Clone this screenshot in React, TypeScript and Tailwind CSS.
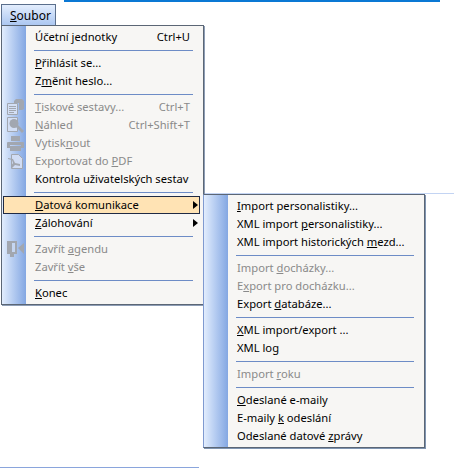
import type { ReactNode } from "react";

type Item =
  | { sep: true }
  | {
      sep?: false;
      label: ReactNode;
      shortcut?: string;
      disabled?: boolean;
      arrow?: boolean;
      active?: boolean;
      icon?: ReactNode;
    };

const ICON = "#a2a7b0";

const ReportIcon = () => (
  <svg width="17" height="16" viewBox="0 0 17 16">
    <path d="M7 2l2-2h6l2 2v8l-2 1h-3V4H7z" fill={ICON} />
    <path d="M.5 4.5h10v11H.5z" fill="#d3dff5" stroke={ICON} />
    <path d="M2 7h7v1H2zM2 9h7v1H2zM2 11h7v1H2zM2 13h5v1H2z" fill={ICON} />
  </svg>
);

const PreviewIcon = () => (
  <svg width="17" height="16" viewBox="0 0 17 16">
    <path d="M.5 .5h10v14H.5z" fill="#d3dff5" stroke={ICON} />
    <circle cx="7" cy="6.5" r="4.5" fill={ICON} />
    <path d="M9 10l2-2 6 6-2 2z" fill={ICON} />
  </svg>
);

const PrintIcon = () => (
  <svg width="17" height="15" viewBox="0 0 17 15">
    <path d="M4 0h9v5H4z" fill={ICON} />
    <path d="M1 6h15a1 1 0 011 1v5h-3V9H3v3H0V7a1 1 0 011-1z" fill={ICON} />
    <path d="M3 10h11v5H3z" fill={ICON} />
  </svg>
);

const PdfIcon = () => (
  <svg width="15" height="15" viewBox="0 0 15 15">
    <path d="M3.5 .5h7l4 4v10h-11z" fill="#d0dcf4" stroke={ICON} />
    <path d="M0 4l5 1 2 4 5 1v2l-5-1-3 3-1-2 2-3-1-3-4-1z" fill={ICON} />
  </svg>
);

const DoorIcon = () => (
  <svg width="17" height="16" viewBox="0 0 17 16">
    <path d="M0 0h10v13H7v3H3v-3H0z" fill={ICON} />
    <path d="M5 2h3v9H5z" fill="#c5d6f2" />
    <path d="M11 7l6-5v11z" fill={ICON} />
  </svg>
);

const mainItems: Item[] = [
  { label: <>Účetní jednotky</>, shortcut: "Ctrl+U" },
  { sep: true },
  { label: <><u>P</u>řihlásit se...</> },
  { label: <>Z<u>m</u>ěnit heslo...</> },
  { sep: true },
  { label: <><u>T</u>iskové sestavy...</>, shortcut: "Ctrl+T", disabled: true, icon: <ReportIcon /> },
  { label: <><u>N</u>áhled</>, shortcut: "Ctrl+Shift+T", disabled: true, icon: <PreviewIcon /> },
  { label: <>Vytisk<u>n</u>out</>, disabled: true, icon: <PrintIcon /> },
  { label: <>Exportovat do <u>P</u>DF</>, disabled: true, icon: <PdfIcon /> },
  { label: <>Kontrola uživatelských sestav</> },
  { sep: true },
  { label: <><u>D</u>atová komunikace</>, arrow: true, active: true },
  { label: <><u>Z</u>álohování</>, arrow: true },
  { sep: true },
  { label: <>Zavřít <u>a</u>gendu</>, disabled: true, icon: <DoorIcon /> },
  { label: <>Zavřít <u>v</u>še</>, disabled: true },
  { sep: true },
  { label: <><u>K</u>onec</> },
];

const subItems: Item[] = [
  { label: <><u>I</u>mport personalistiky...</> },
  { label: <>XML import <u>p</u>ersonalistiky...</> },
  { label: <>XML import historických <u>m</u>ezd...</> },
  { sep: true },
  { label: <>Import <u>d</u>ocházky...</>, disabled: true },
  { label: <>E<u>x</u>port pro docházku...</>, disabled: true },
  { label: <>Export <u>d</u>atabáze...</> },
  { sep: true },
  { label: <><u>X</u>ML import/export ...</> },
  { label: <>XML lo<u>g</u></> },
  { sep: true },
  { label: <>Import <u>r</u>oku</>, disabled: true },
  { sep: true },
  { label: <><u>O</u>deslané e-maily</> },
  { label: <>E-maily <u>k</u> odeslání</> },
  { label: <>Odeslané datové <u>z</u>právy</> },
];

function MenuRows({ items }: { items: Item[] }) {
  return (
    <div className="flex-1 py-[2px]">
      {items.map((item, i) =>
        item.sep ? (
          <div key={i} className="flex h-2 items-center pl-[8px] pr-[10px]">
            <div className="h-px w-full bg-[#6d8cc6]" />
          </div>
        ) : (
          <div
            key={i}
            className={
              "relative flex h-[18px] items-center pl-[9px] pr-[8px] " +
              (item.disabled ? "text-[#8a8a8a]" : "text-black")
            }
          >
            {item.active && (
              <div className="absolute -left-[23px] right-[3px] top-0 bottom-0 border border-[#1f2a44] bg-[#ffe3b4]" />
            )}
            {item.icon && (
              <div className="absolute -left-[23px] top-0 flex h-full w-[24px] items-center justify-center">
                {item.icon}
              </div>
            )}
            <span className="relative flex-1 whitespace-nowrap">{item.label}</span>
            {item.shortcut && <span className="relative whitespace-nowrap pr-[5px]">{item.shortcut}</span>}
            {item.arrow && (
              <svg className="relative -mr-[3px]" width="5" height="8" viewBox="0 0 5 8">
                <path d="M0 0l5 4-5 4z" fill="#000" />
              </svg>
            )}
          </div>
        )
      )}
    </div>
  );
}

function Menu({ items, className }: { items: Item[]; className: string }) {
  return (
    <div className={"absolute flex border border-[#5b6675] bg-[#f7f6f4] " + className}>
      <div className="w-[24px] shrink-0 bg-gradient-to-r from-[#e2edfd] to-[#84a7e2]" />
      <MenuRows items={items} />
    </div>
  );
}

export default function App() {
  return (
    <div
      className="relative h-[468px] w-[454px] overflow-hidden bg-white text-[11.2px] leading-none"
      style={{ fontFamily: '"Noto Sans", sans-serif' }}
    >
      <div className="absolute left-[64px] top-0 h-[2px] w-[376px] bg-[#0a78d4]" />
      <div className="absolute left-[204px] right-0 top-[193px] h-px bg-[#c3d4f3]" />
      <div className="absolute bottom-0 left-0 h-px w-[199px] bg-[#8aa5dc]" />

      <div className="absolute left-[1px] top-[4px] flex h-[22px] w-[55px] items-center border border-b-0 border-[#5b6f8c] bg-gradient-to-b from-[#e4eefd] to-[#a9c5f0] pl-[8px] text-[12px]">
        <span><u>S</u>oubor</span>
      </div>

      <Menu items={mainItems} className="left-[1px] top-[25px] w-[203px] shadow-[1px_1px_0_#8d9db5]" />
      <Menu items={subItems} className="left-[203px] top-[194px] w-[222px] border-l-[#7f9ad0] shadow-[1px_1px_0_#7f94b0]" />
    </div>
  );
}
